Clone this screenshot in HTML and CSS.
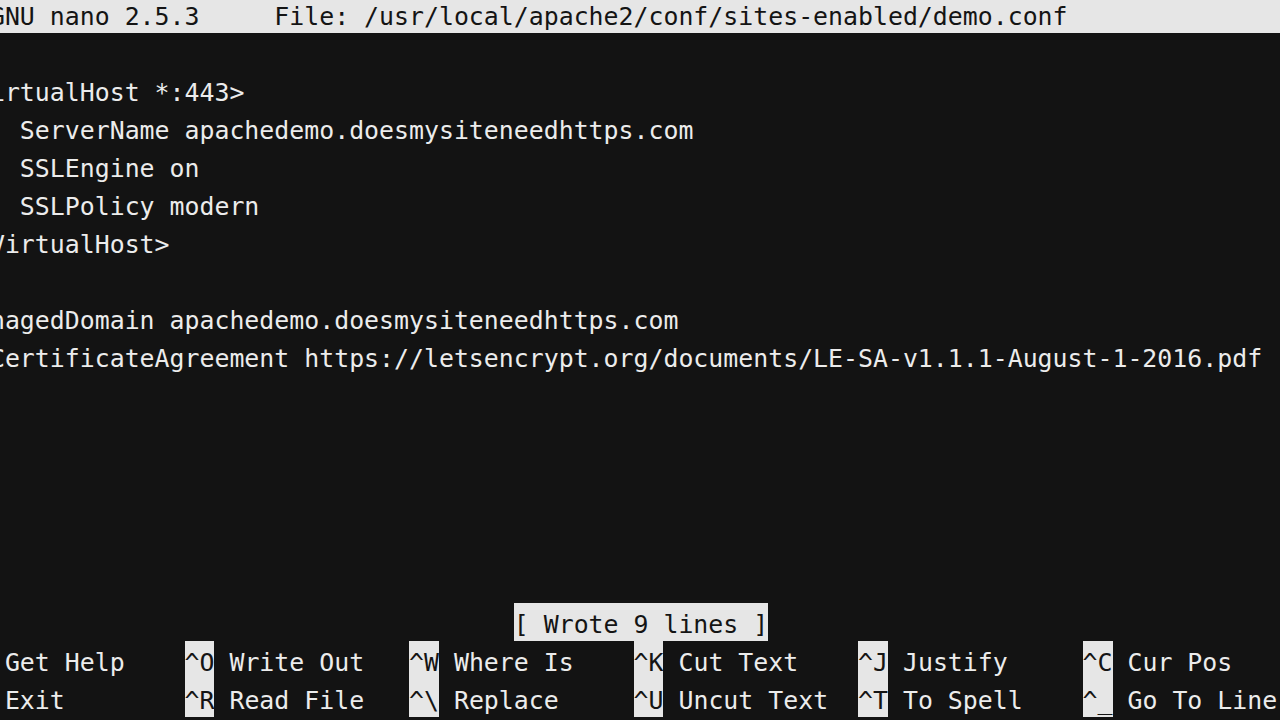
FILE: index.html
```html
<!DOCTYPE html>
<html lang="en">
<head>
    <meta charset="UTF-8">
    <meta name="viewport" content="width=device-width, initial-scale=1.0">
    <title>GNU nano 2.5.3</title>
    <link rel="stylesheet" href="styles.css">
</head>
<body>
    <div class="term">
        <div class="row titlebar">  GNU nano 2.5.3     File: /usr/local/apache2/conf/sites-enabled/demo.conf</div>
        <div class="row"></div>
        <div class="row">&lt;VirtualHost *:443&gt;</div>
        <div class="row">    ServerName apachedemo.doesmysiteneedhttps.com</div>
        <div class="row">    SSLEngine on</div>
        <div class="row">    SSLPolicy modern</div>
        <div class="row">&lt;/VirtualHost&gt;</div>
        <div class="row"></div>
        <div class="row">ManagedDomain apachedemo.doesmysiteneedhttps.com</div>
        <div class="row">MDCertificateAgreement https://letsencrypt.org/documents/LE-SA-v1.1.1-August-1-2016.pdf</div>
        <div class="row"></div>
        <div class="row"></div>
        <div class="row"></div>
        <div class="row"></div>
        <div class="row"></div>
        <div class="row"></div>
        <div class="row status">                                     <span class="inv">[ Wrote 9 lines ]</span></div>
        <div class="row shortcuts"><span class="inv">^G</span> Get Help    <span class="inv">^O</span> Write Out   <span class="inv">^W</span> Where Is    <span class="inv">^K</span> Cut Text    <span class="inv">^J</span> Justify     <span class="inv">^C</span> Cur Pos</div>
        <div class="row shortcuts"><span class="inv">^X</span> Exit        <span class="inv">^R</span> Read File   <span class="inv">^\</span> Replace     <span class="inv">^U</span> Uncut Text  <span class="inv">^T</span> To Spell    <span class="inv">^_</span> Go To Line</div>
    </div>
</body>
</html>
```

FILE: styles.css
```css
html, body {
    margin: 0;
    height: 100%;
    background: #131313;
    overflow: hidden;
}
.term {
    display: flex;
    flex-direction: column;
    width: 1400px;
    margin-top: -5px;
    margin-left: -40px;
    font-family: "DejaVu Sans Mono", "Liberation Mono", monospace;
    font-size: 24.86px;
    color: #ececec;
}
.row {
    height: 38px;
    line-height: 44px;
    white-space: pre;
}
.titlebar {
    background: #e6e6e6;
    color: #141414;
}
.inv {
    display: inline-block;
    height: 38px;
    line-height: 44px;
    vertical-align: top;
    background: #e6e6e6;
    color: #141414;
}
```
